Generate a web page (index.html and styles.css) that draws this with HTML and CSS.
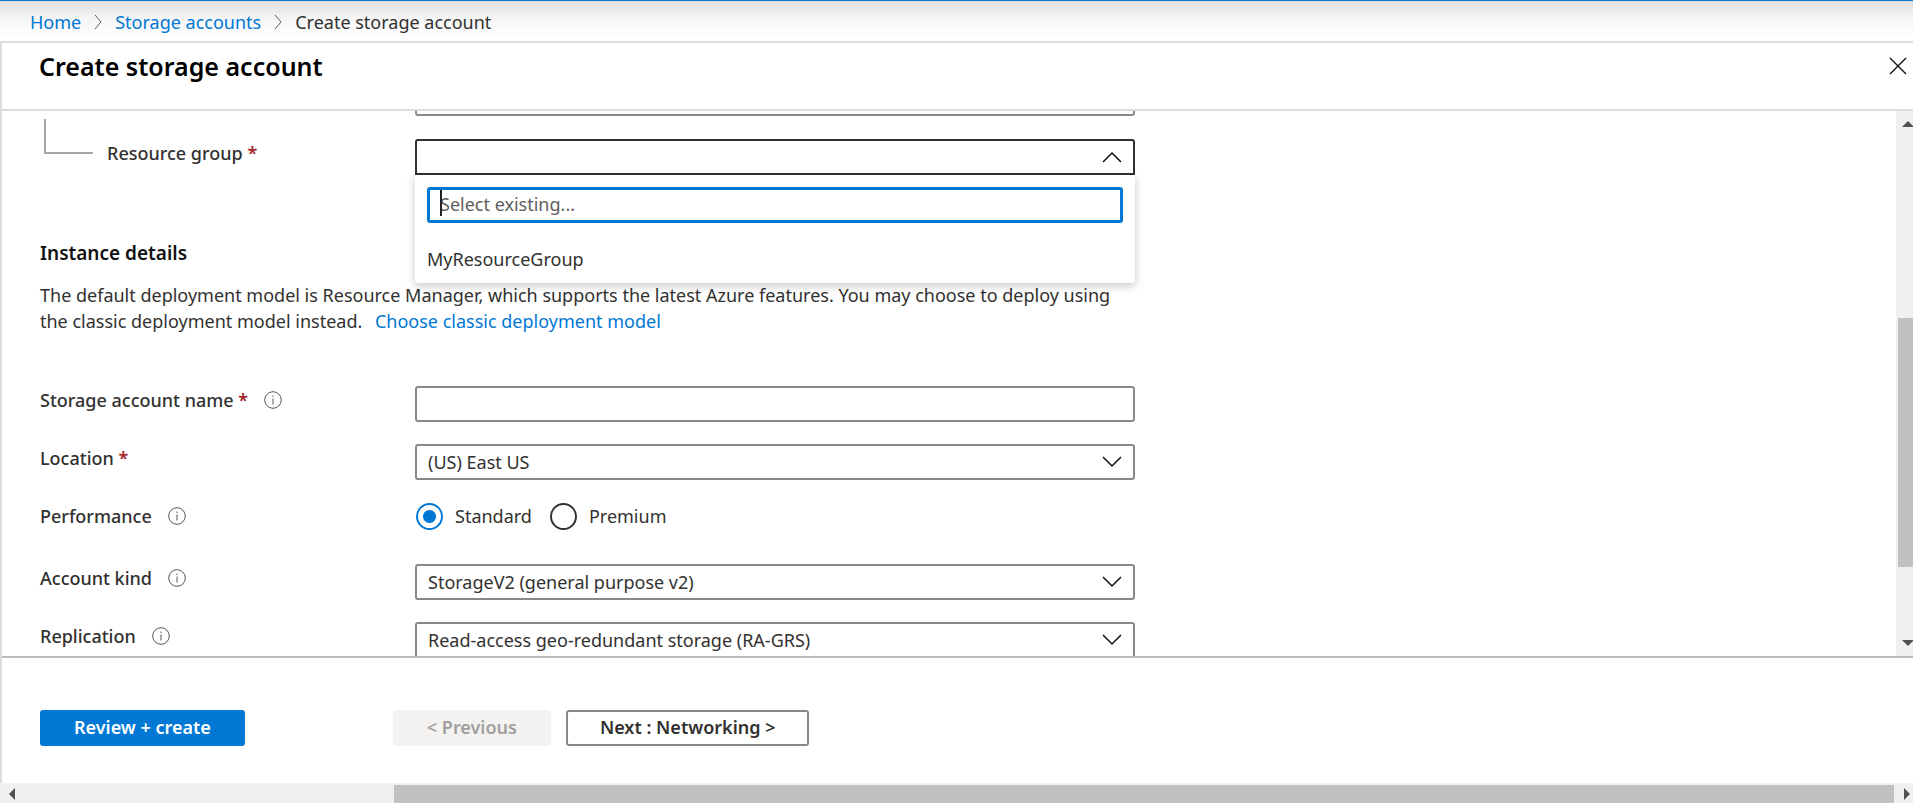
FILE: index.html
```html
<!DOCTYPE html>
<html lang="en">
<head>
<meta charset="utf-8">
<title>Create storage account</title>
<link rel="stylesheet" href="styles.css">
</head>
<body>
<div class="app">
  <nav class="breadcrumb" aria-label="Breadcrumb">
    <a href="#">Home</a>
    <svg class="crumb-sep" viewBox="0 0 8 16"><path d="M1 1l6 7-6 7"/></svg>
    <a href="#">Storage accounts</a>
    <svg class="crumb-sep" viewBox="0 0 8 16"><path d="M1 1l6 7-6 7"/></svg>
    <span>Create storage account</span>
  </nav>

  <main class="panel">
    <header class="panel-header">
      <h1>Create storage account</h1>
      <button class="close" type="button" aria-label="Close">
        <svg viewBox="0 0 18 18"><path d="M1 1l16 16M17 1L1 17"/></svg>
      </button>
    </header>

    <div class="body">
      <div class="viewport">
        <form class="form" id="create">
          <div class="row first">
            <span></span>
            <div class="field"><select aria-label="Subscription"><option></option></select></div>
          </div>
          <div class="row resource">
            <div class="nested">
              <span class="elbow"></span>
              <label class="label" for="rg">Resource group <b>*</b></label>
            </div>
            <div class="field">
              <button class="combo" id="rg" type="button" aria-expanded="true">
                <svg class="chev" viewBox="0 0 20 12"><path d="M1 11l9-9 9 9"/></svg>
              </button>
              <div class="menu">
                <div class="search">
                  <input type="text" placeholder="Select existing..." aria-label="Select existing">
                  <span class="caret"></span>
                </div>
                <button class="option" type="button">MyResourceGroup</button>
              </div>
            </div>
          </div>

          <section class="intro">
            <h2>Instance details</h2>
            <p>The default deployment model is Resource Manager, which supports the latest Azure features. You may choose to deploy using the classic deployment model instead. <a href="#">Choose classic deployment model</a></p>
          </section>

          <div class="rows">
            <div class="row">
              <div class="cap"><label class="label" for="name">Storage account name <b>*</b></label>
                <svg class="info" viewBox="0 0 18 18"><circle cx="9" cy="9" r="8.3"/><path d="M9 7.5v6M9 4.5v1.5"/></svg></div>
              <div class="field"><input class="text" id="name" type="text"></div>
            </div>
            <div class="row">
              <div class="cap"><label class="label" for="loc">Location <b>*</b></label></div>
              <div class="field"><select id="loc"><option>(US) East US</option></select>
                <svg class="chev over" viewBox="0 0 20 12"><path d="M1 1l9 9 9-9"/></svg></div>
            </div>
            <div class="row tall">
              <div class="cap"><span class="label" id="perf">Performance</span>
                <svg class="info" viewBox="0 0 18 18"><circle cx="9" cy="9" r="8.3"/><path d="M9 7.5v6M9 4.5v1.5"/></svg></div>
              <div class="radios" role="radiogroup" aria-labelledby="perf">
                <label><input type="radio" name="perf" checked>Standard</label>
                <label><input type="radio" name="perf">Premium</label>
              </div>
            </div>
            <div class="row">
              <div class="cap"><label class="label" for="kind">Account kind</label>
                <svg class="info" viewBox="0 0 18 18"><circle cx="9" cy="9" r="8.3"/><path d="M9 7.5v6M9 4.5v1.5"/></svg></div>
              <div class="field"><select id="kind"><option>StorageV2 (general purpose v2)</option></select>
                <svg class="chev over" viewBox="0 0 20 12"><path d="M1 1l9 9 9-9"/></svg></div>
            </div>
            <div class="row">
              <div class="cap"><label class="label" for="rep">Replication</label>
                <svg class="info" viewBox="0 0 18 18"><circle cx="9" cy="9" r="8.3"/><path d="M9 7.5v6M9 4.5v1.5"/></svg></div>
              <div class="field"><select id="rep"><option>Read-access geo-redundant storage (RA-GRS)</option></select>
                <svg class="chev over" viewBox="0 0 20 12"><path d="M1 1l9 9 9-9"/></svg></div>
            </div>
          </div>
        </form>
      </div>
      <div class="vbar">
        <svg viewBox="0 0 12 6"><path d="M0 6l6-6 6 6z"/></svg>
        <div class="track"><span></span></div>
        <svg viewBox="0 0 12 6"><path d="M0 0l6 6 6-6z"/></svg>
      </div>
    </div>

    <footer class="actions">
      <button class="btn primary" type="submit" form="create">Review + create</button>
      <div class="pager">
        <button class="btn" type="button" disabled>&lt; Previous</button>
        <button class="btn outline" type="button">Next : Networking &gt;</button>
      </div>
    </footer>
  </main>

  <div class="hbar">
    <svg viewBox="0 0 6 12"><path d="M6 0L0 6l6 6z"/></svg>
    <div class="track"><span></span></div>
    <svg viewBox="0 0 6 12"><path d="M0 0l6 6-6 6z"/></svg>
  </div>
</div>
</body>
</html>
```
FILE: styles.css
```css
* { box-sizing: border-box; }

body {
  margin: 0;
  font-family: "Segoe UI", "Noto Sans", "Open Sans", sans-serif;
  font-size: 18px;
  line-height: 26px;
  color: #323130;
}

button, input, select { font: inherit; color: inherit; margin: 0; }
a { color: #0078d4; text-decoration: none; }
svg { display: block; flex: none; fill: none; stroke: #111; }

.app {
  height: 100vh;
  display: flex;
  flex-direction: column;
  overflow: hidden;
  background: #fff;
}

.breadcrumb {
  display: flex;
  align-items: center;
  gap: 13px;
  height: 43px;
  padding: 2px 30px 0;
  border-top: 1px solid #0078d4;
  border-bottom: 2px solid #dcdcdc;
  background: linear-gradient(#dedede, #f4f4f4 40%, #fff 90%);
}
.crumb-sep { width: 8px; height: 16px; stroke: #605e5c; }

.panel {
  flex: 1;
  min-height: 0;
  display: flex;
  flex-direction: column;
  border-left: 2px solid #dcdcdc;
}
.panel-header {
  display: flex;
  justify-content: space-between;
  align-items: flex-start;
  height: 68px;
  padding: 7px 6px 0 37px;
  border-bottom: 2px solid #dcdcdc;
}
h1 {
  margin: 0;
  font-size: 25px;
  line-height: 32px;
  font-weight: 600;
  color: #000;
}
.close { padding: 7px 0; border: 0; background: none; }
.close svg { width: 18px; height: 18px; stroke-width: 1.4; }

.body { flex: 1; min-height: 0; display: flex; }
.viewport { flex: 1; overflow: hidden; }
.form { max-width: 1133px; margin-top: -31px; padding-left: 38px; }

.row {
  display: grid;
  grid-template-columns: 375px 1fr;
  align-items: start;
}
.first { margin-bottom: 23px; }
.rows { display: grid; gap: 22px; }
.tall { min-height: 40px; }
.cap { display: flex; gap: 16px; }
.label { line-height: 28px; font-weight: 500; }
.label b { color: #a4262c; font-weight: 600; }
.info { width: 18px; height: 18px; margin-top: 5px; stroke: #555; }

.nested { display: flex; gap: 14px; padding-left: 4px; }
.elbow {
  width: 49px;
  height: 35px;
  margin-top: -20px;
  border: solid #a6a6a6;
  border-width: 0 0 2px 2px;
}

.field { position: relative; }
select, .text, .combo {
  display: block;
  width: 100%;
  height: 36px;
  padding: 0 11px;
  border: 2px solid #8a8886;
  border-radius: 3px;
  background: #fff;
  appearance: none;
}
.combo {
  display: flex;
  align-items: center;
  justify-content: flex-end;
  border-color: #323130;
  border-radius: 3px 3px 0 0;
}
.chev { width: 20px; height: 12px; stroke-width: 1.5; }
.over { position: absolute; right: 13px; top: 12px; pointer-events: none; }

.menu {
  position: absolute;
  z-index: 2;
  top: 36px;
  left: 0;
  right: 0;
  display: grid;
  gap: 23px;
  padding: 12px 12px 11px;
  background: #fff;
  border-radius: 0 0 3px 3px;
  box-shadow: 0 3px 10px rgba(0, 0, 0, .22);
}
.search { position: relative; }
.search input {
  display: block;
  width: 100%;
  height: 36px;
  padding: 0 10px 2px;
  border: 3px solid #0078d4;
  border-radius: 3px;
  outline: 0;
}
.search input::placeholder { color: #605e5c; opacity: 1; }
.caret { position: absolute; left: 13px; top: 3px; width: 2px; height: 26px; background: #222; }
.option { padding: 0; border: 0; background: none; text-align: left; }

.intro { padding-top: 65px; margin-bottom: 52px; }
h2 { margin: 0 0 16px; font-size: 19px; line-height: 26px; font-weight: 600; color: #111; }
p { margin: 0; }
p a { margin-left: 8px; }

.radios { display: flex; gap: 17px; }
.radios label { display: flex; align-items: center; gap: 12px; line-height: 28px; }
.radios input {
  appearance: none;
  width: 27px;
  height: 27px;
  margin-left: 1px;
  border: 2px solid #323130;
  border-radius: 50%;
}
.radios input:checked {
  border-color: #0078d4;
  background: radial-gradient(circle, #0078d4 6px, #fff 7px);
}

.actions {
  display: flex;
  gap: 148px;
  height: 127px;
  padding: 52px 38px 0;
  border-top: 2px solid #bbb;
}
.pager { display: flex; gap: 15px; }
.btn {
  height: 36px;
  padding: 0 32px 2px;
  border: 2px solid transparent;
  border-radius: 3px;
  line-height: 30px;
  font-weight: 600;
}
.btn:disabled { color: #a19f9d; background: #f3f2f1; }
.primary { color: #fff; background: #0078d4; }
.outline { border-color: #8a8886; background: #fff; }

.vbar {
  display: flex;
  flex-direction: column;
  align-items: flex-end;
  width: 17px;
  padding: 10px 0;
  background: #f0f0f0;
}
.vbar svg, .hbar svg { fill: #505050; stroke: none; }
.vbar svg { width: 12px; height: 6px; margin-right: -1px; }
.vbar .track { flex: 1; width: 15px; display: flex; flex-direction: column; }
.vbar .track::before { content: ""; flex: 191; }
.vbar .track span { flex: 249; background: #c1c1c1; }
.vbar .track::after { content: ""; flex: 73; }

.hbar {
  display: flex;
  align-items: center;
  justify-content: space-between;
  height: 20px;
  padding: 2px 3px 0 9px;
  background: #f0f0f0;
}
.hbar svg { width: 6px; height: 12px; }
.hbar .track { flex: 1; height: 18px; display: flex; padding-right: 10px; }
.hbar .track::before { content: ""; flex: 379; }
.hbar .track span { flex: 1500; background: #c1c1c1; }
```
